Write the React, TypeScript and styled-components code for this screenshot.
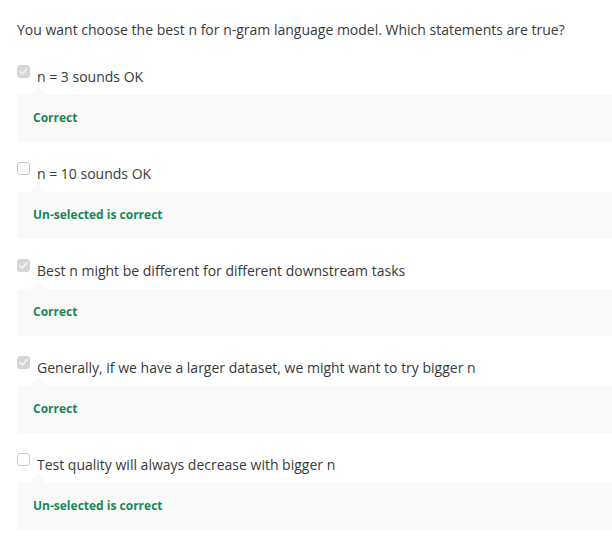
import React from "react";
import styled, { createGlobalStyle } from "styled-components";

const GlobalStyle = createGlobalStyle`
  html, body { margin: 0; padding: 0; background: #ffffff; }
  body { font-family: "Open Sans", "Liberation Sans", sans-serif; color: #373a3c; }
`;

const Page = styled.div`
  padding: 20px 0 0 17px;
`;

const Question = styled.div`
  font-size: 14px;
  line-height: 20px;
  margin-bottom: 25px;
`;

const Item = styled.div`
  display: flex;
  flex-direction: column;
  margin-bottom: 20px;
`;

const Row = styled.div`
  display: flex;
  align-items: flex-start;
  height: 30px;
`;

const Box = styled.span<{ $checked: boolean }>`
  box-sizing: border-box;
  width: 13px;
  height: 13px;
  flex: none;
  border-radius: 3px;
  display: flex;
  align-items: center;
  justify-content: center;
  background: ${(p) => (p.$checked ? "#d6d6d6" : "#ffffff")};
  border: 1px solid ${(p) => (p.$checked ? "#d6d6d6" : "#c9c9c9")};
`;

const Label = styled.span`
  font-size: 14px;
  line-height: 20px;
  margin: 2px 0 0 7px;
`;

const Feedback = styled.div`
  position: relative;
  box-sizing: border-box;
  height: 47px;
  padding: 14px 0 0 16px;
  background: #f9f9f9;
  font-size: 12px;
  line-height: 18px;
  font-weight: 700;
  color: #1a8659;

  &::before {
    content: "";
    position: absolute;
    top: -9px;
    left: 12px;
    border-left: 9.5px solid transparent;
    border-right: 9.5px solid transparent;
    border-bottom: 9px solid #f9f9f9;
  }
`;

const Check = () => (
  <svg width="11" height="11" viewBox="0 0 11 11">
    <path d="M2 5.8 L4.4 8 L9 2.8" fill="none" stroke="#f4f4f4" strokeWidth="1.6" strokeLinecap="round" strokeLinejoin="round" />
  </svg>
);

const options = [
  { text: "n = 3 sounds OK", checked: true, fb: "Correct" },
  { text: "n = 10 sounds OK", checked: false, fb: "Un-selected is correct" },
  { text: "Best n might be different for different downstream tasks", checked: true, fb: "Correct" },
  { text: "Generally, if we have a larger dataset, we might want to try bigger n", checked: true, fb: "Correct" },
  { text: "Test quality will always decrease with bigger n", checked: false, fb: "Un-selected is correct" },
];

export default function App() {
  return (
    <Page>
      <GlobalStyle />
      <Question>You want choose the best n for n-gram language model. Which statements are true?</Question>
      {options.map((o) => (
        <Item key={o.text}>
          <Row>
            <Box $checked={o.checked}>{o.checked && <Check />}</Box>
            <Label>{o.text}</Label>
          </Row>
          <Feedback>{o.fb}</Feedback>
        </Item>
      ))}
    </Page>
  );
}
